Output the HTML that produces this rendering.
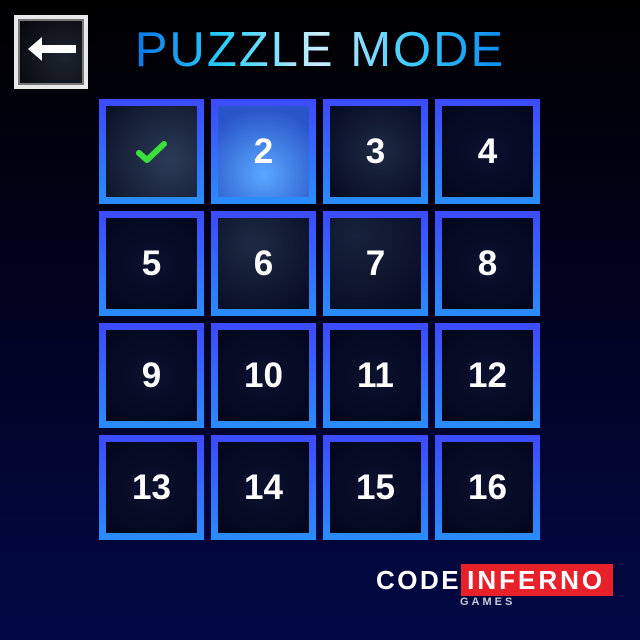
<!DOCTYPE html>
<html><head><style>
body{margin:0;width:640px;height:640px;overflow:hidden;background:linear-gradient(#000 0%,#01021a 40%,#020845 100%);font-family:"Liberation Sans",sans-serif;position:relative}
.back{position:absolute;left:14px;top:15px;width:66px;height:66px;border:4px solid #e8e8e8;background:radial-gradient(circle at 70% 60%,#1d2430,#050608);box-shadow:inset 0 0 0 2px #777}
.title{position:absolute;left:0;width:640px;top:22px;text-align:center;font-size:49px;font-weight:normal;letter-spacing:2px;background:linear-gradient(90deg,#0a7ce8 22%,#2ad0ff 35%,#cdefff 50%,#36c8ff 65%,#0f8cf0 78%);-webkit-background-clip:text;color:transparent}
.t{position:absolute;width:91px;height:91px;border:7px solid;border-image:linear-gradient(#3c4cff,#2a8aff) 1;background:radial-gradient(circle at 50% 50%,#0b1230,#03061a);color:#fff;font-weight:bold;font-size:35px;display:flex;align-items:center;justify-content:center}
.logo{position:absolute;left:376px;top:565px;font-weight:bold;font-size:26px;letter-spacing:2.5px;color:#fff;white-space:nowrap}
.logo span{background:#e8202a;padding:1px 8px 1px 6px;margin-left:0;letter-spacing:3px}
.g{position:absolute;left:460px;top:596px;font-size:11px;font-weight:bold;letter-spacing:3px;color:#c8c8d8}
</style></head><body>
<div class="back"><svg width="66" height="66" viewBox="0 0 66 66"><path d="M10 30 L24 18 L24 26 L58 26 L58 34 L24 34 L24 42 Z" fill="#fff"/></svg></div>
<div class="title">PUZZLE MODE</div>
<div class="t" style="left:99px;top:99px;background:radial-gradient(circle at 70% 60%,#2c3c58,#0a1024)"><svg width="34" height="26" viewBox="0 0 34 26"><path d="M4 14 L12 21 L29 5" stroke="#3ce03c" stroke-width="6" fill="none" stroke-linecap="round" stroke-linejoin="round"/></svg></div>
<div class="t" style="left:211px;top:99px;background:radial-gradient(circle at 50% 75%,#5aa8ff,#2a55c8 80%)">2</div>
<div class="t" style="left:323px;top:99px;background:radial-gradient(circle at 55% 50%,#1e2a44,#050a20)">3</div>
<div class="t" style="left:435px;top:99px">4</div>
<div class="t" style="left:99px;top:211px">5</div>
<div class="t" style="left:211px;top:211px;background:radial-gradient(circle at 40% 30%,#1e2a44,#050a20)">6</div>
<div class="t" style="left:323px;top:211px;background:radial-gradient(circle at 30% 20%,#18223c,#050a20)">7</div>
<div class="t" style="left:435px;top:211px">8</div>
<div class="t" style="left:99px;top:323px">9</div>
<div class="t" style="left:211px;top:323px">10</div>
<div class="t" style="left:323px;top:323px">11</div>
<div class="t" style="left:435px;top:323px">12</div>
<div class="t" style="left:99px;top:435px">13</div>
<div class="t" style="left:211px;top:435px">14</div>
<div class="t" style="left:323px;top:435px">15</div>
<div class="t" style="left:435px;top:435px">16</div>
<div class="logo">CODE<span>INFERNO</span></div>
<div class="g">GAMES</div>
</body></html>
